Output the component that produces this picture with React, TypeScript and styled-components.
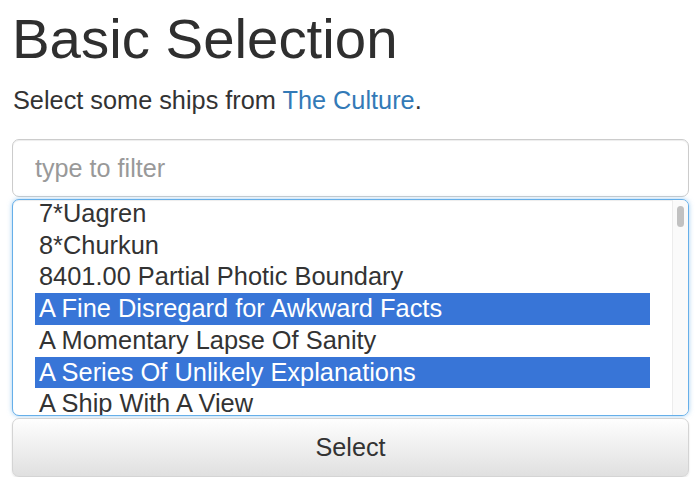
import React from "react";
import styled, { createGlobalStyle } from "styled-components";

const Global = createGlobalStyle`
  html, body { margin: 0; padding: 0; background: #fff; }
  body { font-family: "Liberation Sans", Arial, Helvetica, sans-serif; color: #333; }
  * { box-sizing: border-box; }
`;

const Page = styled.div`
  padding: 8px 11px 0 12px;
  width: 700px;
`;

const Title = styled.h1`
  margin: 0;
  font-size: 56.4px;
  line-height: 61.6px;
  font-weight: 400;
  color: #2f2f2f;
  padding-left: 0;
`;

const Lead = styled.p`
  margin: 12.5px 0 0 1px;
  font-size: 25.3px;
  line-height: 36px;
  color: #333;
`;

const Link = styled.a`
  color: #337ab7;
  text-decoration: none;
`;

const Filter = styled.input`
  display: block;
  width: 100%;
  height: 58px;
  margin-top: 21px;
  padding: 0 22px;
  border: 1px solid #ccc;
  border-radius: 7px;
  font-family: inherit;
  font-size: 25.2px;
  color: #555;
  box-shadow: inset 0 1px 1px rgba(0, 0, 0, 0.075);
  outline: none;
  &::placeholder { color: #999; }
`;

const ListBox = styled.div`
  margin-top: 2px;
  height: 217px;
  border: 1px solid #66afe9;
  border-radius: 7px;
  box-shadow: inset 0 1px 1px rgba(0, 0, 0, 0.075), 0 0 5px rgba(102, 175, 233, 0.6);
  display: flex;
  overflow: hidden;
  background: #fff;
`;

const Options = styled.div`
  flex: 1;
  padding: 0 22px;
  overflow: hidden;
`;

const OptionsInner = styled.div`
  margin-top: -2px;
`;

const Option = styled.div<{ $selected?: boolean }>`
  height: 31.7px;
  line-height: 31.7px;
  padding-left: 4px;
  font-size: 25.4px;
  white-space: nowrap;
  color: ${(p) => (p.$selected ? "#fff" : "#333")};
  background: ${(p) => (p.$selected ? "#3875d7" : "transparent")};
`;

const Track = styled.div`
  width: 16px;
  border-left: 1px solid #ececec;
  background: #fafafa;
  padding: 6px 0 0 4px;
`;

const Thumb = styled.div`
  width: 7px;
  height: 21px;
  border-radius: 4px;
  background: #c1c1c1;
`;

const Button = styled.button`
  display: block;
  width: 100%;
  height: 59px;
  margin-top: 2px;
  border: 1px solid #d4d4d4;
  border-radius: 7px;
  background: linear-gradient(to bottom, #fefefe 0%, #e0e0e0 100%);
  box-shadow: 0 1px 2px rgba(0, 0, 0, 0.12);
  font-family: inherit;
  font-size: 25.2px;
  color: #333;
  padding: 0;
`;

const ships = [
  { name: "7*Uagren", selected: false },
  { name: "8*Churkun", selected: false },
  { name: "8401.00 Partial Photic Boundary", selected: false },
  { name: "A Fine Disregard for Awkward Facts", selected: true },
  { name: "A Momentary Lapse Of Sanity", selected: false },
  { name: "A Series Of Unlikely Explanations", selected: true },
  { name: "A Ship With A View", selected: false },
];

export default function App() {
  return (
    <>
      <Global />
      <Page>
        <Title>Basic Selection</Title>
        <Lead>
          Select some ships from <Link href="#">The Culture</Link>.
        </Lead>
        <Filter placeholder="type to filter" />
        <ListBox>
          <Options>
            <OptionsInner>
              {ships.map((s) => (
                <Option key={s.name} $selected={s.selected}>
                  {s.name}
                </Option>
              ))}
            </OptionsInner>
          </Options>
          <Track>
            <Thumb />
          </Track>
        </ListBox>
        <Button>Select</Button>
      </Page>
    </>
  );
}
